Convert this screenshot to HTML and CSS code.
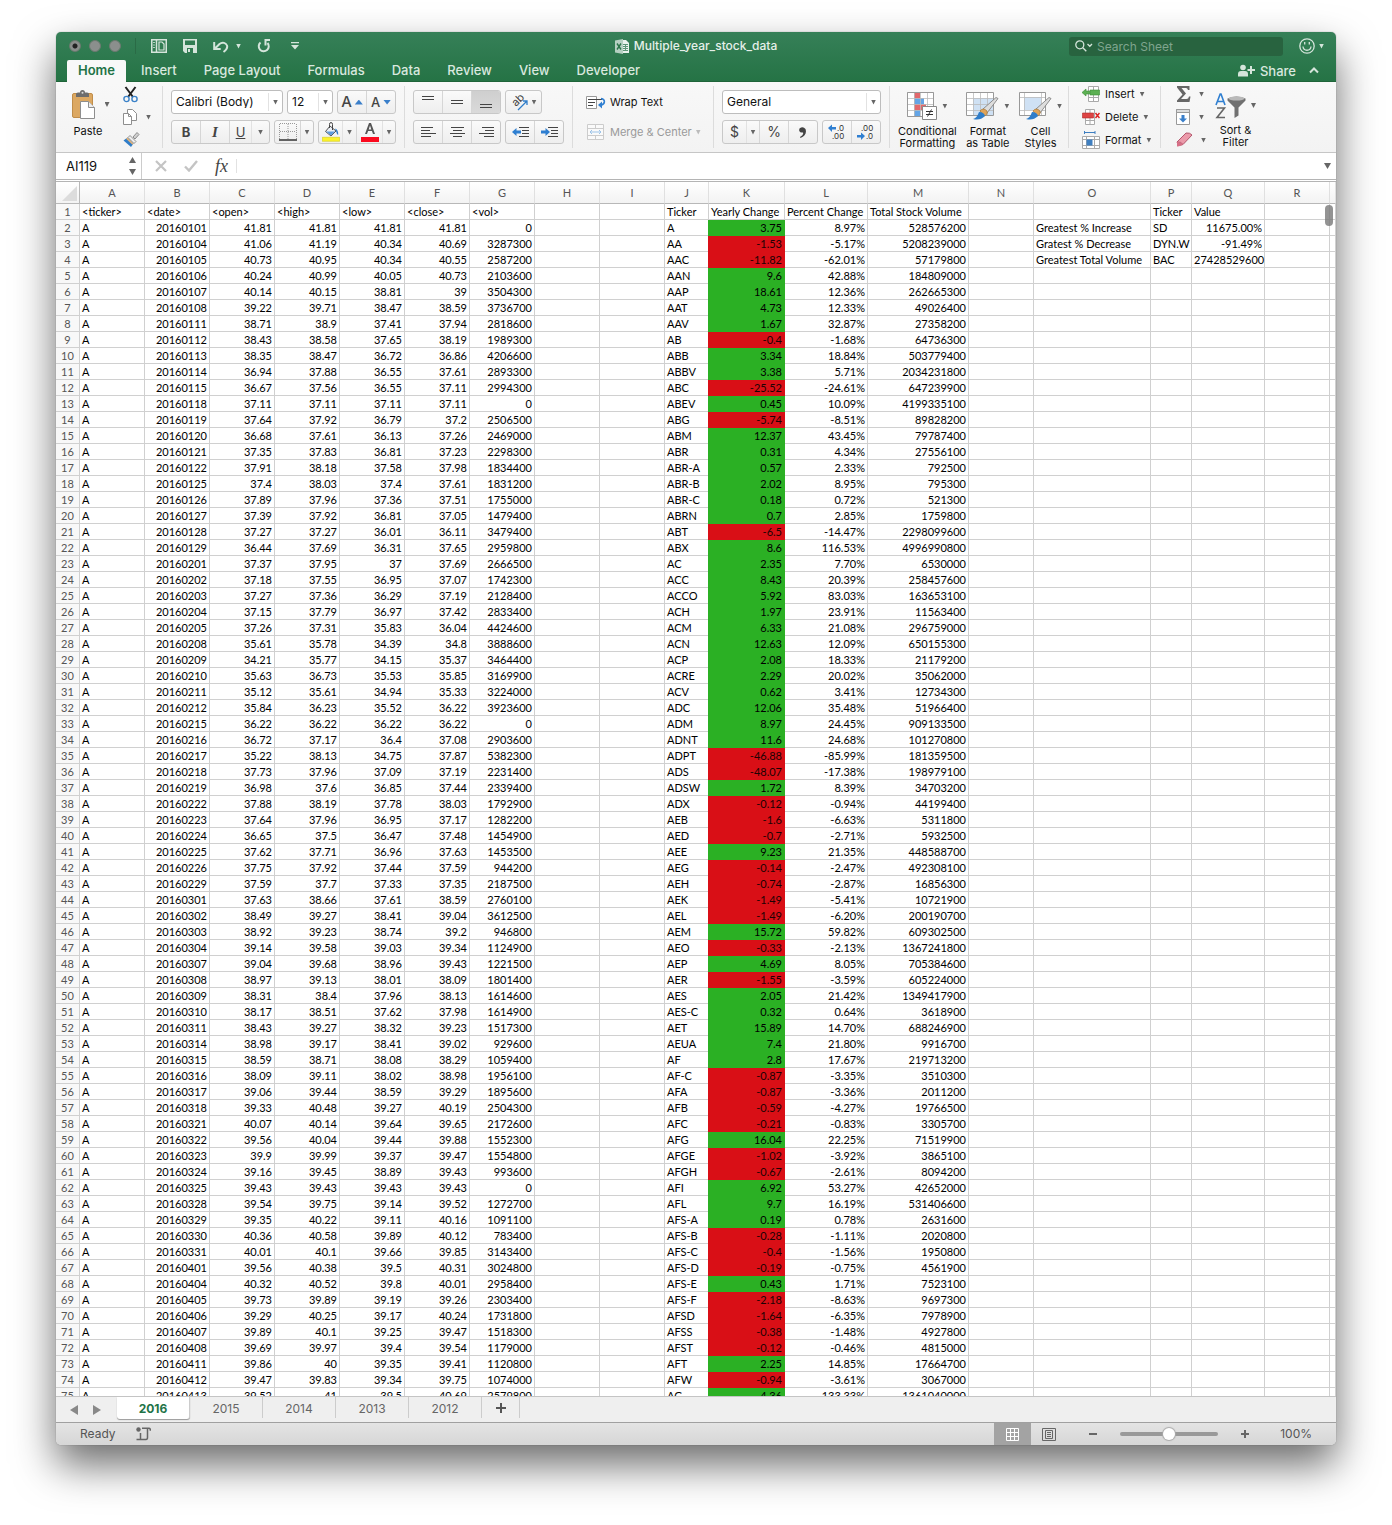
FILE: index.html
```html
<!DOCTYPE html>
<html lang="en">
<head>
<meta charset="utf-8">
<title>Multiple_year_stock_data</title>
<link rel="stylesheet" href="styles.css">
</head>
<body>
<main class="window">
  <header class="titlebar">
    <div class="title-row">
      <div class="title-left">
        <div class="lights">
          <button class="light light-edited" aria-label="Close"></button>
          <button class="light" aria-label="Minimize"></button>
          <button class="light" aria-label="Zoom"></button>
        </div>
        <div class="quick">
          <button class="plain" aria-label="New from template"><svg width="16" height="14" viewBox="0 0 16 14" fill="none" stroke="#d5e5db" stroke-width="1.5"><rect x=".75" y=".75" width="14.5" height="12.5"/><path d="M5.500 1v12"/><path d="M2.200 3.500h1.600M2.200 6h1.600M2.200 8.500h1.600" stroke-width="1"/><path d="M8 3h3l2 2v6H8z" stroke-width="1.200"/></svg></button>
          <button class="plain" aria-label="Save"><svg width="14" height="14" viewBox="0 0 14 14"><path fill="#d5e5db" fill-rule="evenodd" d="M0 0h14v14H2L0 12zM2 1.500v4.500h10v-4.500zM4 9v5h6V9zM5 10h2v3H5z"/></svg></button>
          <button class="plain undo" aria-label="Undo"><svg width="16" height="13" viewBox="0 0 16 13" fill="none" stroke="#d5e5db" stroke-width="2"><path d="M1.200 2v7h6.500M2 8.500L6.500 4c3-2.500 6.500-1 7.500 1.500.8 2.500-.5 4.500-3.500 6.500"/></svg><i class="tri tri-light"></i></button>
          <button class="plain" aria-label="Redo"><svg width="14" height="14" viewBox="0 0 14 14" fill="none" stroke="#d5e5db" stroke-width="2"><path d="M3.500 3.500a5 5 0 1 0 7 .5M13 1H8.500v5.500"/></svg></button>
          <button class="plain" aria-label="Customize toolbar"><svg width="8" height="8" viewBox="0 0 8 8" fill="#d5e5db"><path d="M0 0h8v1.200H0zM0 3h8L4 7.500z"/></svg></button>
        </div>
      </div>
      <h1 class="doc-title"><svg width="15" height="15" viewBox="0 0 15 15"><path fill="#eaf2ed" d="M6 1h5l3 3v10H6z"/><path stroke="#5d9677" d="M8 5.500h5M8 7.500h5M8 9.500h5M8 11.500h5M10.500 5v7"/><path fill="#b5d0c1" d="M0 1.500L8 0v15L0 13.500z"/><path stroke="#2b7549" stroke-width="1.400" d="M2 4.500l4 6M6 4.500l-4 6"/></svg>Multiple_year_stock_data</h1>
      <div class="title-right">
        <label class="search">
          <svg width="18" height="12" viewBox="0 0 18 12" fill="none" stroke="#d5e5db" stroke-width="1.300"><circle cx="4.800" cy="4.800" r="4"/><path d="M7.800 7.800l3.500 3.500M12.500 4l2.300 2.300L17 4" /></svg>
          <input type="search" placeholder="Search Sheet" aria-label="Search Sheet">
        </label>
        <button class="plain smile" aria-label="Feedback"><svg width="16" height="16" viewBox="0 0 16 16" fill="none" stroke="#d5e5db" stroke-width="1.300"><circle cx="8" cy="8" r="7.200"/><path d="M4 8.500c.5 5 7.500 5 8 0M5.700 4v2.500M10.300 4v2.500"/></svg><i class="tri tri-light"></i></button>
      </div>
    </div>
    <nav class="tabs">
      <a class="tab tab-active" href="#home">Home</a>
      <a class="tab" href="#insert">Insert</a>
      <a class="tab" href="#layout">Page Layout</a>
      <a class="tab" href="#formulas">Formulas</a>
      <a class="tab" href="#data">Data</a>
      <a class="tab" href="#review">Review</a>
      <a class="tab" href="#view">View</a>
      <a class="tab" href="#developer">Developer</a>
      <button class="plain share"><svg width="17" height="13" viewBox="0 0 17 13" fill="#d5e5db"><circle cx="5" cy="3.500" r="2.800"/><path d="M0 12.500V10q0-3 3-3h4q3 0 3 3v2.500zM12 2h2v3h3v2h-3v3h-2V7H9.500V5H12z"/></svg>Share</button>
      <button class="plain" aria-label="Collapse ribbon"><svg width="10" height="7" viewBox="0 0 10 7" fill="none" stroke="#d5e5db" stroke-width="2"><path d="M1 5.500l4-4 4 4"/></svg></button>
    </nav>
  </header>

  <section class="ribbon" aria-label="Home ribbon">
    <div class="group group-clip">
      <button class="big paste">
        <span class="big-icon"><svg width="26" height="30" viewBox="0 0 26 30"><rect x="1.500" y="3.500" width="20" height="24" rx="1.500" fill="#dca862" stroke="#c08d4a"/><path d="M5 7V4q0-1.500 2-1.500h2q0-2.500 2.500-2.500T14 2.500h2q2 0 2 1.500v3z" fill="#6d6d6d"/><circle cx="11.500" cy="2.800" r="1" fill="#ddd"/><path d="M9.500 11.500h8l6 6v11h-14z" fill="#fff" stroke="#8e8e8e"/><path d="M17.500 11.500v6h6" fill="#eee" stroke="#8e8e8e"/></svg><i class="tri"></i></span>
        <span class="big-label">Paste</span>
      </button>
      <div class="stack">
        <button class="plain" aria-label="Cut"><svg width="16" height="17" viewBox="0 0 16 17" fill="none"><path d="M2.500 1L10 11M12.500 1L5 11" stroke="#222" stroke-width="2"/><circle cx="3.500" cy="13" r="2.600" stroke="#3b82c8" stroke-width="1.400"/><circle cx="11.500" cy="13" r="2.600" stroke="#3b82c8" stroke-width="1.400"/></svg></button>
        <button class="plain" aria-label="Copy"><svg width="15" height="16" viewBox="0 0 15 16" fill="#fff" stroke="#8e8e8e"><path d="M4.500.500h5l4 4v7h-9z"/><path d="M.5 4.500h5l3 3v8h-8z"/><path d="M5.500 4.500v3h3" fill="none"/></svg><i class="tri"></i></button>
        <button class="plain" aria-label="Format painter"><svg width="17" height="16" viewBox="0 0 17 16"><path d="M10 5l4-4.500 2 2L12 7z" fill="#d0d0d0" stroke="#777" stroke-width=".8"/><path d="M7 3.500l6 6-2 2-6-6z" fill="#eee" stroke="#777" stroke-width=".8"/><path d="M4.500 5.500l6 6L8 15 .5 8.500z" fill="#2f7dc9"/><path d="M4.500 5.500l6 6-1 1.200-6.500-6z" fill="#e0b27a"/></svg></button>
      </div>
    </div>

    <div class="group rows">
      <div class="row">
        <span class="combo combo-font"><select aria-label="Font"><option>Calibri (Body)</option></select><span class="drop"><i class="tri"></i></span></span>
        <span class="combo combo-size"><select aria-label="Font size"><option>12</option></select><span class="drop"><i class="tri"></i></span></span>
        <span class="seg"><button class="w29" aria-label="Increase font size"><b class="a-big">A</b><i class="tri tri-blue tri-up"></i></button><button class="w29" aria-label="Decrease font size"><b class="a-small">A</b><i class="tri tri-blue"></i></button></span>
      </div>
      <div class="row">
        <span class="seg"><button class="w29 bold">B</button><button class="w29 ital">I</button><button class="w22 under">U</button><button class="w18 thin" aria-label="Underline style"><i class="tri"></i></button></span>
        <span class="seg"><button class="w27" aria-label="Borders"><svg width="18" height="18" viewBox="0 0 18 18" fill="none"><path d="M1 .5h16M.5 1v15M9 1v15M17.500 1v15M1 8.500h16" stroke="#999" stroke-dasharray="1 1"/><path d="M0 17h18" stroke="#333" stroke-width="1.400"/></svg></button><button class="w13" aria-label="Border style"><i class="tri"></i></button></span>
        <span class="seg"><button class="w24" aria-label="Fill color"><svg width="18" height="20" viewBox="0 0 18 20"><path d="M8 4l6 5-5 5-5.500-4.500z" fill="#e9eef5" stroke="#555"/><path d="M7.500 6V2.500q0-2 1.500-2t1.500 2V8" fill="none" stroke="#444"/><path d="M13 6.500q3.500 1 3.200 6.500-1.500-.5-2.200-4z" fill="#2f7dc9"/><path d="M4 9.500h9L9 13.500z" fill="#5d9bdd"/><path fill="#fbf22c" stroke="#d3cb1a" stroke-width=".6" d="M.3 15.300h17.400v4H.3z"/></svg></button><button class="w14 thin" aria-label="Fill palette"><i class="tri"></i></button><button class="w27" aria-label="Font color"><svg width="18" height="20" viewBox="0 0 18 20"><path fill="#555" fill-rule="evenodd" d="M8 1h2l4 11h-2l-1.100-3H7.100L6 12H4zM9 3.500L7.700 7.400h2.600z"/><path fill="#fb0a1e" d="M0 15h18v5H0z"/></svg></button><button class="w13 thin" aria-label="Font palette"><i class="tri"></i></button></span>
      </div>
    </div>

    <div class="group rows">
      <div class="row">
        <span class="seg"><button class="w29" aria-label="Align top"><svg width="14" height="14" viewBox="0 0 14 14" stroke="#444"><path d="M1 1.500h12M1 4.500h12"/></svg></button><button class="w29" aria-label="Align middle"><svg width="14" height="14" viewBox="0 0 14 14" stroke="#444"><path d="M1 5.500h12M1 8.500h12"/></svg></button><button class="w29 pressed" aria-label="Align bottom"><svg width="14" height="14" viewBox="0 0 14 14" stroke="#444"><path d="M1 9.500h12M1 12.500h12"/></svg></button></span>
        <span class="seg"><button class="w36" aria-label="Orientation"><svg class="orient" width="18" height="18" viewBox="0 0 18 18"><text class="abtext" transform="translate(5 14) rotate(-45)">ab</text><path d="M7 17L15.500 8.500M16 12V8h-4" fill="none" stroke="#2f7dc9" stroke-width="1.300"/></svg><i class="tri"></i></button></span>
      </div>
      <div class="row">
        <span class="seg"><button class="w29" aria-label="Align left"><svg width="15" height="14" viewBox="0 0 15 14" stroke="#444"><path d="M0 2.500h12M0 5.500h9M0 8.500h15M0 11.500h10"/></svg></button><button class="w29" aria-label="Center"><svg width="15" height="14" viewBox="0 0 15 14" stroke="#444"><path d="M1 2.500h13M3 5.500h9M0 8.500h15M3 11.500h9"/></svg></button><button class="w29" aria-label="Align right"><svg width="15" height="14" viewBox="0 0 15 14" stroke="#444"><path d="M3 2.500h12M6 5.500h9M0 8.500h15M5 11.500h10"/></svg></button></span>
        <span class="seg"><button class="w29" aria-label="Decrease indent"><svg width="17" height="14" viewBox="0 0 17 14"><path d="M7 2.500h10M10 5.500h7M10 8.500h7M7 11.500h10" stroke="#444"/><path d="M0 7l4.500-4v2.500H9v3H4.500V11z" fill="#2f7fd1"/></svg></button><button class="w29" aria-label="Increase indent"><svg width="17" height="14" viewBox="0 0 17 14"><path d="M7 2.500h10M10 5.500h7M10 8.500h7M7 11.500h10" stroke="#444"/><path d="M9 7L4.500 3v2.500H0v3h4.500V11z" fill="#2f7fd1"/></svg></button></span>
      </div>
    </div>

    <div class="group rows wraps">
      <button class="row plain item"><svg width="20" height="14" viewBox="0 0 20 14" fill="none"><path d="M.5 1.500h10v12H.500z" fill="#fff" stroke="#999"/><path d="M2 4.500h14M2 7.500h7M2 10.500h5" stroke="#444"/><path d="M15 3.500c5 1 4 6 0 6.500" stroke="#2f7fd1" stroke-width="1.600"/><path d="M12 10l4-3.500v7z" fill="#2f7fd1"/></svg>Wrap Text</button>
      <button class="row plain item dim" disabled><svg width="20" height="16" viewBox="-1 0 20 16" fill="#fafafa" stroke="#ccc"><path d="M.5.500h16v15H.5zM.5 4.500h16M.5 11.500h16M8.500.500v4M8.500 11.500v4"/><path d="M3 8h11M5 6L3 8l2 2M12 6l2 2-2 2" fill="none" stroke="#9cc3e8"/></svg><span>Merge &amp; Center</span><i class="tri tri-dim"></i></button>
    </div>

    <div class="group rows">
      <div class="row">
        <span class="combo combo-num"><select aria-label="Number format"><option>General</option></select><span class="drop"><i class="tri"></i></span></span>
      </div>
      <div class="row">
        <span class="seg"><button class="w24 sign">$</button><button class="w13 thin" aria-label="Currency"><i class="tri"></i></button><button class="w29 sign">%</button><button class="w29" aria-label="Comma style"><svg width="8" height="11" viewBox="0 0 8 11"><path fill="#444" d="M.5 1.500Q4-1 6.500 2 8.500 8 1.500 11l-.5-1Q5 8 4 5.500 1 6 .3 4q-.3-1.500.2-2.500z"/></svg></button></span>
        <span class="seg"><button class="w29" aria-label="Increase decimal"><svg width="18" height="16" viewBox="0 0 18 16"><path d="M0 4l4-3.500V3h4v2.500H4V8z" fill="#2f7fd1"/><text x="9" y="7" class="dec">.0</text><text x="4" y="15" class="dec">.00</text></svg></button><button class="w29" aria-label="Decrease decimal"><svg width="18" height="16" viewBox="0 0 18 16"><path d="M8 12L4 8.500V11H0v2.500h4V16z" fill="#2f7fd1"/><text x="4" y="7" class="dec">.00</text><text x="9" y="15" class="dec">.0</text></svg></button></span>
      </div>
    </div>

    <div class="group bigs">
      <button class="big">
        <span class="big-icon"><svg width="30" height="28" viewBox="0 0 30 28"><path d="M.5.500h26v24H.5z" fill="#fff"/><path d="M7 0h6v6H7zM7 12h12v6H7z" fill="#e2686c"/><path d="M7 6h10v6H7zM7 18h6v6.500H7z" fill="#64a5e6"/><path d="M.5.500h26v24H.5zM.5 6.500h26M.5 12.500h26M.5 18.500h26M7.500.500v24M13.500.500v24M20.500.500v24" fill="none" stroke="#bbb" stroke-width=".8"/><path d="M.5.500h26v24H.5z" fill="none" stroke="#999"/><path d="M15.500 14.500h14v13h-14z" fill="#fff" stroke="#888"/><path d="M19 19.500h7M19 22.500h7M24.500 17.500l-4 7" stroke="#333"/></svg><i class="tri"></i></span>
        <span class="big-label">Conditional<br>Formatting</span>
      </button>
      <button class="big">
        <span class="big-icon"><svg width="33" height="28" viewBox="0 0 33 28"><path d="M.5.500h27v23H.5z" fill="#fff"/><path d="M7 6h20v18H7z" fill="#cfe1f4"/><path d="M.5 6.500h27M.5 12.500h27M.5 18.500h27M7.500.500v23M14.500.500v23M21.500.500v23" stroke="#bbb" stroke-width=".8"/><path d="M.5.500h27v23H.5z" fill="none" stroke="#999"/><path d="M17 17L30 5.500l2 1L21 21z" fill="#ddd" stroke="#777" stroke-width=".8"/><path d="M14 19q3-4 7 0 1 4-3 5z" fill="#e0a458" stroke="#a87532" stroke-width=".7"/><path d="M7 27q4-1 6-7 5 0 6 4-5 5-12 3z" fill="#2f7dc9"/></svg><i class="tri"></i></span>
        <span class="big-label">Format<br>as Table</span>
      </button>
      <button class="big">
        <span class="big-icon"><svg width="33" height="28" viewBox="0 0 33 28"><path d="M.5.500h26v23H.5z" fill="#fff"/><path d="M5 5h17v13H5z" fill="#cfe1f4"/><path d="M.5 5.500h26M.5 18.500h26M5.500.500v23M22.500.500v23" stroke="#bbb" stroke-width=".8"/><path d="M.5.500h26v23H.5z" fill="none" stroke="#999"/><path d="M17 17L30 5.500l2 1L21 21z" fill="#ddd" stroke="#777" stroke-width=".8"/><path d="M14 19q3-4 7 0 1 4-3 5z" fill="#e0a458" stroke="#a87532" stroke-width=".7"/><path d="M7 27q4-1 6-7 5 0 6 4-5 5-12 3z" fill="#2f7dc9"/></svg><i class="tri"></i></span>
        <span class="big-label">Cell<br>Styles</span>
      </button>
    </div>

    <div class="group stack cells">
      <button class="plain item"><svg width="18" height="16" viewBox="0 0 18 16"><path d="M6.500.500h10v15h-10zM11.500.500v15M6.500 11.500h10" fill="#fff" stroke="#aaa"/><path d="M0 6.500L4 3v2h3.500V8H4v2zM8 4h9.500v5H8z" fill="#5cb053" stroke="#3d8f35" stroke-width=".6"/></svg>Insert<i class="tri"></i></button>
      <button class="plain item"><svg width="18" height="16" viewBox="0 0 18 16"><path d="M3.500.500h9v15h-9zM8 .5v15M3.500 11.500h9" fill="#fff" stroke="#aaa"/><path d="M.5 4h11v5H.500z" fill="#dd4444" stroke="#b02a2a" stroke-width=".6"/><path d="M13.500 4l4 5M17.500 4l-4 5" stroke="#d22" stroke-width="1.500"/></svg>Delete<i class="tri"></i></button>
      <button class="plain item"><svg width="18" height="18" viewBox="0 0 18 18"><path d="M.5 5.500h17v12H.5zM.5 8.500h17M.5 14.500h17M4.500 5.500v12M12.500 5.500v12" fill="#fff" stroke="#aaa"/><path d="M4.500 8.500h6v6h-6z" fill="#3f7fc0"/><path d="M3 1.500h10M2.500 0v3M13 0v3" stroke="#3f7fc0" fill="none"/></svg>Format<i class="tri"></i></button>
    </div>

    <div class="group group-edit">
      <div class="stack edits">
        <button class="plain" aria-label="AutoSum"><svg width="15" height="16" viewBox="0 0 15 16"><path fill="#666" d="M1 0h12.500v4H12q-.5-2-2-2H5.500l4.500 5.500L5 13h5.500q2 0 2.500-2.500h1.500L13.500 16H1v-1.500L6.500 8.500 1 1.500z"/></svg><i class="tri"></i></button>
        <button class="plain" aria-label="Fill"><svg width="15" height="16" viewBox="0 0 15 16"><path d="M.5.500h13v15H.5z" fill="#fff" stroke="#999"/><path d="M.5.500h13v3H.500z" fill="#ddd" stroke="#999"/><path d="M5.500 6h3v3.500H11l-4 4-4-4h2.500z" fill="#3a7fca"/></svg><i class="tri"></i></button>
        <button class="plain" aria-label="Clear"><svg width="17" height="16" viewBox="0 0 17 16"><path d="M1 10l9-9q4-.5 6 2l-9 9.500q-5 2-6-2.500z" fill="#eb9aaa" stroke="#b3566c"/><path d="M1 10q4-.5 6 2.500" fill="none" stroke="#b3566c"/><path d="M1 10q4-.5 6 2.500-4 2.500-6 2z" fill="#d66f86"/></svg><i class="tri"></i></button>
      </div>
      <button class="big sort">
        <span class="big-icon"><svg width="31" height="26" viewBox="0 0 31 26"><path fill="none" stroke="#2f7fd1" stroke-width="1.600" d="M1 12L5.200 1h.8L10 12M2.500 8.500h6"/><path fill="none" stroke="#666" stroke-width="1.600" d="M2 15h7.500L2 24.500h8"/><path d="M12.500 5.500q9-4 18 0v2l-7 7v8l-4 2.500V14.500l-7-7z" fill="#707070"/><ellipse cx="21.500" cy="5.500" rx="8" ry="2" fill="#b9b9b9"/></svg><i class="tri"></i></span>
        <span class="big-label">Sort &amp;<br>Filter</span>
      </button>
    </div>
  </section>

  <section class="formula" aria-label="Formula bar">
    <div class="namebox"><input type="text" value="AI119" aria-label="Name box"><span class="stepper"><i class="tri tri-up tri-big"></i><i class="tri tri-big"></i></span></div>
    <div class="fx-tools">
      <button class="plain" aria-label="Cancel"><svg width="12" height="12" viewBox="0 0 12 12" stroke="#c4c4c4" stroke-width="2.200"><path d="M1 1l10 10M11 1L1 11"/></svg></button>
      <button class="plain" aria-label="Enter"><svg width="14" height="12" viewBox="0 0 14 12" fill="none" stroke="#c4c4c4" stroke-width="2.400"><path d="M1 6.500l4 4L13 1"/></svg></button>
      <button class="plain fx">fx</button>
    </div>
    <input class="fx-input" type="text" aria-label="Formula">
    <button class="plain fx-more" aria-label="Expand formula bar"><i class="tri tri-big"></i></button>
  </section>

  <section class="sheet">
    <table class="grid">
      <colgroup>
        <col class="c-head"><col class="c-std" span="9"><col class="c-j"><col class="c-k"><col class="c-l"><col class="c-m"><col class="c-std"><col class="c-o"><col class="c-p"><col class="c-q"><col class="c-std"><col>
      </colgroup>
      <thead><tr id="letters"></tr></thead>
      <tbody id="cells"></tbody>
    </table>
    <div class="scroll-thumb"></div>
  </section>

  <nav class="sheets" aria-label="Sheets">
    <div class="sheet-nav">
      <button class="plain" aria-label="Previous sheet"><svg width="8" height="10" viewBox="0 0 8 10" fill="#888"><path d="M8 0v10L0 5z"/></svg></button>
      <button class="plain" aria-label="Next sheet"><svg width="8" height="10" viewBox="0 0 8 10" fill="#888"><path d="M0 0v10l8-5z"/></svg></button>
    </div>
    <a class="sheet-tab sheet-active" href="#2016">2016</a>
    <a class="sheet-tab" href="#2015">2015</a>
    <a class="sheet-tab" href="#2014">2014</a>
    <a class="sheet-tab" href="#2013">2013</a>
    <a class="sheet-tab" href="#2012">2012</a>
    <button class="plain add" aria-label="Add sheet"><svg width="10" height="10" viewBox="0 0 10 10" stroke="#555" stroke-width="2"><path d="M0 5h10M5 0v10"/></svg></button>
  </nav>

  <footer class="status">
    <span class="ready">Ready</span>
    <svg width="15" height="14" viewBox="0 0 15 14" fill="none" stroke="#666" stroke-width="1.500"><circle cx="2.500" cy="2.500" r="2.200" fill="#666" stroke="none"/><path d="M6 1.200h7q1.500 0 1.300 2.500M11.500 1.500v9q0 2-1.500 2H1M4.500 6v6.500M.5 12.500h8"/></svg>
    <div class="status-right">
      <button class="view view-on" aria-label="Normal view"><svg width="13" height="13" viewBox="0 0 13 13" fill="none" stroke="#fff"><path d="M.5.500h12v12H.5zM.5 4.500h12M.5 8.500h12M4.500.500v12M8.500.500v12"/></svg></button>
      <button class="view" aria-label="Page layout view"><svg width="14" height="13" viewBox="0 0 14 13" fill="none" stroke="#666"><path d="M.5.500h13v12H.5zM3.500 2.500h7v8h-7zM5 4.500h4M5 6.500h4M5 8.500h4"/></svg></button>
      <button class="plain zoom-btn" aria-label="Zoom out"><svg width="8" height="2" viewBox="0 0 8 2" fill="#666"><path d="M0 0h8v2H0z"/></svg></button>
      <input class="zoom" type="range" min="0" max="200" value="100" aria-label="Zoom">
      <button class="plain zoom-btn" aria-label="Zoom in"><svg width="8" height="8" viewBox="0 0 8 8" fill="#666"><path d="M3 0h2v3h3v2H5v3H3V5H0V3h3z"/></svg></button>
      <span class="pct">100%</span>
    </div>
  </footer>
</main>
<script src="app.js"></script>
</body>
</html>
```
FILE: styles.css
```css
* { box-sizing: border-box; }
body {
  margin: 0;
  height: 100vh;
  padding: 32px 56px 80px;
  background: #fff;
  font: 11px/12px Inter, Roboto, sans-serif;
  color: #111;
  overflow: hidden;
}
button, input, select { font: inherit; color: inherit; margin: 0; padding: 0; }
a { text-decoration: none; color: inherit; }
svg { display: block; flex: none; }

.window {
  height: 100%;
  display: flex;
  flex-direction: column;
  border-radius: 5px;
  background: #f5f5f5;
  box-shadow: 0 0 1px rgba(0, 0, 0, .5), 0 20px 42px rgba(0, 0, 0, .58);
}
.plain {
  display: flex;
  align-items: center;
  border: 0;
  background: none;
}
.tri {
  flex: none;
  width: 5px;
  height: 5px;
  background: #666;
  clip-path: polygon(0 0, 100% 0, 50% 100%);
}
.tri-up { clip-path: polygon(50% 0, 100% 100%, 0 100%); }
.tri-light { background: #d5e5db; }
.tri-dim { background: #bbb; }
.tri-blue { width: 8px; background: #3a7fca; }
.tri-big { width: 7px; height: 6px; }

/* Title bar */
.titlebar {
  flex: none;
  border-radius: 5px 5px 0 0;
  background: linear-gradient(#368058, #257345);
  border-bottom: 1px solid #1f6439;
  color: #d9e8df;
}
.title-row {
  height: 28px;
  display: grid;
  grid-template-columns: 1fr auto 1fr;
  align-items: center;
}
.title-left, .lights, .quick, .title-right { display: flex; align-items: center; }
.title-left { padding-left: 13px; }
.lights { gap: 8px; padding-right: 14px; border-right: 1px solid #2a6b46; height: 16px; }
.light {
  width: 12px;
  height: 12px;
  border: 1px solid #6c7a70;
  border-radius: 50%;
  background: #8b8f8d;
}
.light-edited { background: radial-gradient(circle, #222 0 2px, #8b8f8d 3px); }
.quick { padding-left: 15px; gap: 16px; }
.undo { gap: 7px; }
.undo + .plain { padding-right: 4px; }
.doc-title {
  margin: 0;
  display: flex;
  align-items: center;
  gap: 4px;
  font-size: 12px;
  font-weight: 500;
  color: #e6f0ea;
}
.title-right { justify-content: flex-end; padding-right: 12px; gap: 16px; }
.search {
  width: 214px;
  height: 19px;
  display: flex;
  align-items: center;
  gap: 4px;
  padding-left: 6px;
  border-radius: 3px;
  background: #28633f;
}
.search input {
  flex: 1;
  min-width: 0;
  border: 0;
  outline: 0;
  background: none;
  font-size: 12px;
  appearance: none;
}
.search input::placeholder { color: #7fa58e; }
.smile { gap: 4px; }
.tabs { height: 21px; display: flex; padding: 0 17px 0 11px; gap: 3px; }
.tab {
  height: 22px;
  padding: 0 12px;
  font-size: 13px;
  line-height: 21px;
  font-weight: 500;
}
.tab-active {
  padding: 0 11px;
  background: #f8f8f8;
  color: #217346;
  font-weight: 600;
  border-radius: 2px 2px 0 0;
}
.share { margin-left: auto; margin-right: 10px; gap: 5px; font-size: 13px; font-weight: 500; }

/* Ribbon */
.ribbon {
  flex: none;
  height: 71px;
  display: flex;
  padding: 4px 0;
  background: linear-gradient(#f8f8f8, #f3f3f3);
  border-bottom: 1px solid #c6c6c6;
}
.group {
  flex: none;
  display: flex;
  padding: 0 8px;
  border-right: 1px solid #dcdcdc;
}
.group:last-child { border-right: 0; }
.rows { flex-direction: column; gap: 6px; padding-top: 4px; }
.row { display: flex; gap: 4px; height: 24px; }
.stack { display: flex; flex-direction: column; justify-content: space-between; }
.stack .plain { height: 16px; gap: 8px; }
.group-clip { width: 107px; padding: 0 0 0 14px; gap: 13px; }
.big {
  display: flex;
  flex-direction: column;
  align-items: center;
  border: 0;
  background: none;
  padding-top: 6px;
}
.big-icon { display: flex; align-items: center; gap: 5px; height: 28px; }
.big-label { margin-top: 5px; text-align: center; line-height: 12px; }
.paste { width: 40px; padding-top: 3px; }
.paste .big-icon { height: 31px; gap: 8px; }
.paste .big-label { padding-right: 4px; }
.combo {
  display: flex;
  border: 1px solid #bdbdbd;
  border-radius: 3px;
  background: #fff;
  align-items: center;
}
.combo select {
  flex: 1;
  min-width: 0;
  height: 20px;
  padding-left: 4px;
  border: 0;
  background: none;
  appearance: none;
  font-size: 12px;
}
.drop {
  width: 14px;
  height: 18px;
  display: flex;
  align-items: center;
  justify-content: center;
  border-left: 1px solid #e2e2e2;
}
.combo-font { width: 112px; }
.combo-size { width: 46px; }
.combo-num { width: 159px; }
.seg {
  display: flex;
  border: 1px solid #c8c8c8;
  border-radius: 3px;
  background: linear-gradient(#fafafa, #eee);
  overflow: hidden;
}
.seg button {
  display: flex;
  align-items: center;
  justify-content: center;
  gap: 3px;
  border: 0;
  background: none;
  color: #444;
}
.seg button + button { border-left: 1px solid #d6d6d6; }
.seg .thin { border-left-color: #e2e2e2; }
.seg .pressed { background: linear-gradient(#cfcfcf, #dadada); }
.w13 { width: 13px; }
.w14 { width: 14px; }
.w18 { width: 18px; }
.w22 { width: 22px; }
.w24 { width: 23px; }
.w27 { width: 26px; }
.w27:first-child { width: 25px; }
.w29 { width: 29px; }
.w29:first-child { width: 28px; }
.w36 { width: 35px; }
.a-big { font-size: 15px; font-weight: 500; }
.a-small { font-size: 13px; font-weight: 500; }
.seg .bold { font-size: 13px; font-weight: 700; }
.seg .ital { font: italic 700 15px "Liberation Serif", serif; }
.seg .under { font-size: 13px; text-decoration: underline; }
.seg .sign { font-size: 14px; }
.orient { overflow: visible; }
.abtext { font: 11px Inter, sans-serif; fill: #444; }
.dec { font: 8px Inter, sans-serif; fill: #333; }
.wraps { width: 141px; padding-left: 13px; }
.item { gap: 4px; font-weight: 400; }
.dim { color: #9a9a9a; }
.bigs { width: 179px; padding: 0 6px 0 8px; justify-content: space-between; }
.cells { width: 92px; padding: 0 0 0 13px; }
.cells .item { gap: 5px; }
.group-edit { padding-left: 15px; gap: 9px; }

/* Formula bar */
.formula {
  flex: none;
  height: 29px;
  display: flex;
  background: #fff;
  border-bottom: 3px double #b4b4b4;
}
.namebox { width: 86px; display: flex; align-items: center; padding: 0 5px 0 10px; border-right: 1px solid #ccc; }
.namebox input { flex: 1; min-width: 0; border: 0; font-size: 13px; }
.stepper { display: flex; flex-direction: column; gap: 6px; }
.fx-tools { display: flex; align-items: center; width: 95px; justify-content: space-between; padding: 0 8px 0 13px; border-right: 1px solid #e2e2e2; margin: 6px 0; }
.fx { font: italic 18px "Liberation Serif", serif; color: #444; }
.fx-input { flex: 1; min-width: 0; border: 0; }
.fx-more { padding-right: 5px; }

/* Cells */
.sheet { flex: 1; min-height: 0; overflow: hidden; position: relative; background: #fff; }
.grid {
  width: 100%;
  table-layout: fixed;
  border-collapse: separate;
  border-spacing: 0;
  font: 11px/15px Lato, sans-serif;
  color: #000;
}
.c-head { width: 24px; }
.c-std { width: 65px; }
.c-j { width: 44px; }
.c-k { width: 76px; }
.c-l { width: 83px; }
.c-m { width: 101px; }
.c-o { width: 117px; }
.c-p { width: 41px; }
.c-q { width: 73px; }
.grid th, .grid td {
  height: 16px;
  padding: 0 2px;
  border: solid #d0d0d0;
  border-width: 0 1px 1px 0;
  white-space: nowrap;
}
.grid th { font-weight: 400; color: #555; text-align: center; background: #f8f8f8; }
.grid thead th {
  height: 22px;
  line-height: 21px;
  background: linear-gradient(#fff, #f3f3f3);
  border-bottom-color: #b8b8b8;
  border-right-color: #e0e0e0;
}
.grid thead .corner { padding: 0 2px 2px 6px; border-right-color: #b8b8b8; }
.corner svg { margin-top: 3px; }
.grid td { text-align: left; }
.grid .num { text-align: right; }
.grid .up { background: #2bb024; border-color: #2bb024; box-shadow: -1px 0 #2bb024; }
.grid .down { background: #d90f16; border-color: #d90f16; box-shadow: -1px 0 #d90f16; color: #1c0203; }
.scroll-thumb {
  position: absolute;
  top: 23px;
  right: 3px;
  width: 8px;
  height: 21px;
  border-radius: 4px;
  background: rgba(120, 120, 120, .8);
}

/* Sheet tabs */
.sheets {
  flex: none;
  height: 26px;
  display: flex;
  background: #efefef;
  border-top: 1px solid #c4c4c4;
  font-size: 12px;
  color: #666;
}
.sheet-nav { width: 61px; display: flex; gap: 15px; padding-left: 14px; }
.sheet-tab {
  width: 73px;
  height: 21px;
  line-height: 23px;
  text-align: center;
  border-right: 1px solid #ccc;
}
.sheet-active {
  height: 22px;
  background: #fff;
  color: #217346;
  font-weight: 700;
  border-radius: 0 0 3px 3px;
  box-shadow: 0 1px 1px #999;
}
.add { width: 38px; height: 21px; justify-content: center; border-right: 1px solid #ccc; }

/* Status bar */
.status {
  flex: none;
  height: 23px;
  display: flex;
  align-items: center;
  gap: 20px;
  padding-left: 24px;
  border-top: 1px solid #a0a0a0;
  border-radius: 0 0 5px 5px;
  background: linear-gradient(#e4e4e4, #d6d6d6);
  color: #555;
}
.ready, .pct { font-size: 12px; }
.status-right { margin-left: auto; display: flex; align-items: center; height: 100%; padding-right: 24px; }
.view { width: 35px; height: 100%; display: flex; align-items: center; justify-content: center; border: 0; background: none; }
.view-on { width: 37px; background: #a3a3a3; }
.zoom-btn { width: 54px; justify-content: center; }
.zoom { width: 98px; height: 14px; appearance: none; background: none; }
.zoom::-webkit-slider-runnable-track { height: 4px; border-radius: 2px; background: #999; }
.zoom::-webkit-slider-thumb {
  appearance: none;
  width: 12px;
  height: 12px;
  margin-top: -4px;
  border-radius: 50%;
  background: #fff;
  box-shadow: 0 0 1px 1px #aaa;
}
.pct { width: 40px; text-align: right; }
```
FILE: app.js
```js
// Each line: date open high low close volume | ticker change percent volume
const lines = `20160101 41.81 41.81 41.81 41.81 0|A 3.75 8.97% 528576200
20160104 41.06 41.19 40.34 40.69 3287300|AA -1.53 -5.17% 5208239000
20160105 40.73 40.95 40.34 40.55 2587200|AAC -11.82 -62.01% 57179800
20160106 40.24 40.99 40.05 40.73 2103600|AAN 9.6 42.88% 184809000
20160107 40.14 40.15 38.81 39 3504300|AAP 18.61 12.36% 262665300
20160108 39.22 39.71 38.47 38.59 3736700|AAT 4.73 12.33% 49026400
20160111 38.71 38.9 37.41 37.94 2818600|AAV 1.67 32.87% 27358200
20160112 38.43 38.58 37.65 38.19 1989300|AB -0.4 -1.68% 64736300
20160113 38.35 38.47 36.72 36.86 4206600|ABB 3.34 18.84% 503779400
20160114 36.94 37.88 36.55 37.61 2893300|ABBV 3.38 5.71% 2034231800
20160115 36.67 37.56 36.55 37.11 2994300|ABC -25.52 -24.61% 647239900
20160118 37.11 37.11 37.11 37.11 0|ABEV 0.45 10.09% 4199335100
20160119 37.64 37.92 36.79 37.2 2506500|ABG -5.74 -8.51% 89828200
20160120 36.68 37.61 36.13 37.26 2469000|ABM 12.37 43.45% 79787400
20160121 37.35 37.83 36.81 37.23 2298300|ABR 0.31 4.34% 27556100
20160122 37.91 38.18 37.58 37.98 1834400|ABR-A 0.57 2.33% 792500
20160125 37.4 38.03 37.4 37.61 1831200|ABR-B 2.02 8.95% 795300
20160126 37.89 37.96 37.36 37.51 1755000|ABR-C 0.18 0.72% 521300
20160127 37.39 37.92 36.81 37.05 1479400|ABRN 0.7 2.85% 1759800
20160128 37.27 37.27 36.01 36.11 3479400|ABT -6.5 -14.47% 2298099600
20160129 36.44 37.69 36.31 37.65 2959800|ABX 8.6 116.53% 4996990800
20160201 37.37 37.95 37 37.69 2666500|AC 2.35 7.70% 6530000
20160202 37.18 37.55 36.95 37.07 1742300|ACC 8.43 20.39% 258457600
20160203 37.27 37.36 36.29 37.19 2128400|ACCO 5.92 83.03% 163653100
20160204 37.15 37.79 36.97 37.42 2833400|ACH 1.97 23.91% 11563400
20160205 37.26 37.31 35.83 36.04 4424600|ACM 6.33 21.08% 296759000
20160208 35.61 35.78 34.39 34.8 3888600|ACN 12.63 12.09% 650155300
20160209 34.21 35.77 34.15 35.37 3464400|ACP 2.08 18.33% 21179200
20160210 35.63 36.73 35.53 35.85 3169900|ACRE 2.29 20.02% 35062000
20160211 35.12 35.61 34.94 35.33 3224000|ACV 0.62 3.41% 12734300
20160212 35.84 36.23 35.52 36.22 3923600|ADC 12.06 35.48% 51966400
20160215 36.22 36.22 36.22 36.22 0|ADM 8.97 24.45% 909133500
20160216 36.72 37.17 36.4 37.08 2903600|ADNT 11.6 24.68% 101270800
20160217 35.22 38.13 34.75 37.87 5382300|ADPT -46.88 -85.99% 181359500
20160218 37.73 37.96 37.09 37.19 2231400|ADS -48.07 -17.38% 198979100
20160219 36.98 37.6 36.85 37.44 2339400|ADSW 1.72 8.39% 34703200
20160222 37.88 38.19 37.78 38.03 1792900|ADX -0.12 -0.94% 44199400
20160223 37.64 37.96 36.95 37.17 1282200|AEB -1.6 -6.63% 5311800
20160224 36.65 37.5 36.47 37.48 1454900|AED -0.7 -2.71% 5932500
20160225 37.62 37.71 36.96 37.63 1453500|AEE 9.23 21.35% 448588700
20160226 37.75 37.92 37.44 37.59 944200|AEG -0.14 -2.47% 492308100
20160229 37.59 37.7 37.33 37.35 2187500|AEH -0.74 -2.87% 16856300
20160301 37.63 38.66 37.61 38.59 2760100|AEK -1.49 -5.41% 10721900
20160302 38.49 39.27 38.41 39.04 3612500|AEL -1.49 -6.20% 200190700
20160303 38.92 39.23 38.74 39.2 946800|AEM 15.72 59.82% 609302500
20160304 39.14 39.58 39.03 39.34 1124900|AEO -0.33 -2.13% 1367241800
20160307 39.04 39.68 38.96 39.43 1221500|AEP 4.69 8.05% 705384600
20160308 38.97 39.13 38.01 38.09 1801400|AER -1.55 -3.59% 605224000
20160309 38.31 38.4 37.96 38.13 1614600|AES 2.05 21.42% 1349417900
20160310 38.17 38.51 37.62 37.98 1614900|AES-C 0.32 0.64% 3618900
20160311 38.43 39.27 38.32 39.23 1517300|AET 15.89 14.70% 688246900
20160314 38.98 39.17 38.41 39.02 929600|AEUA 7.4 21.80% 9916700
20160315 38.59 38.71 38.08 38.29 1059400|AF 2.8 17.67% 219713200
20160316 38.09 39.11 38.02 38.98 1956100|AF-C -0.87 -3.35% 3510300
20160317 39.06 39.44 38.59 39.29 1895600|AFA -0.87 -3.36% 2011200
20160318 39.33 40.48 39.27 40.19 2504300|AFB -0.59 -4.27% 19766500
20160321 40.07 40.14 39.64 39.65 2172600|AFC -0.21 -0.83% 3305700
20160322 39.56 40.04 39.44 39.88 1552300|AFG 16.04 22.25% 71519900
20160323 39.9 39.99 39.37 39.47 1554800|AFGE -1.02 -3.92% 3865100
20160324 39.16 39.45 38.89 39.43 993600|AFGH -0.67 -2.61% 8094200
20160325 39.43 39.43 39.43 39.43 0|AFI 6.92 53.27% 42652000
20160328 39.54 39.75 39.14 39.52 1272700|AFL 9.7 16.19% 531406600
20160329 39.35 40.22 39.11 40.16 1091100|AFS-A 0.19 0.78% 2631600
20160330 40.36 40.58 39.89 40.12 783400|AFS-B -0.28 -1.11% 2020800
20160331 40.01 40.1 39.66 39.85 3143400|AFS-C -0.4 -1.56% 1950800
20160401 39.56 40.38 39.5 40.31 3024800|AFS-D -0.19 -0.75% 4561900
20160404 40.32 40.52 39.8 40.01 2958400|AFS-E 0.43 1.71% 7523100
20160405 39.73 39.89 39.19 39.26 2303400|AFS-F -2.18 -8.63% 9697300
20160406 39.29 40.25 39.17 40.24 1731800|AFSD -1.64 -6.35% 7978900
20160407 39.89 40.1 39.25 39.47 1518300|AFSS -0.38 -1.48% 4927800
20160408 39.69 39.97 39.4 39.54 1179000|AFST -0.12 -0.46% 4815000
20160411 39.86 40 39.35 39.41 1120800|AFT 2.25 14.85% 17664700
20160412 39.47 39.83 39.34 39.75 1074000|AFW -0.94 -3.61% 3067000
20160413 39.52 41 39.5 40.69 2579800|AG 4.36 133.33% 1361040000`.split("\n");

const summary = [
  ["Greatest % Increase", "SD", "11675.00%"],
  ["Gratest % Decrease", "DYN.W", "-91.49%"],
  ["Greatest Total Volume", "BAC", "27428529600"],
];

const headings = ["<ticker>", "<date>", "<open>", "<high>", "<low>", "<close>", "<vol>", "", "",
  "Ticker", "Yearly Change", "Percent Change", "Total Stock Volume", "", "", "Ticker", "Value", "", ""];

const letters = document.getElementById("letters");
const body = document.getElementById("cells");

const corner = document.createElement("th");
corner.className = "corner";
corner.innerHTML = '<svg width="15" height="15" viewBox="0 0 15 15" fill="#dcdcdc"><path d="M15 0v15H0z"/></svg>';
letters.append(corner);
for (const letter of [..."ABCDEFGHIJKLMNOPQR", ""]) {
  const th = document.createElement("th");
  th.textContent = letter;
  letters.append(th);
}

function addRow(number, values) {
  const tr = body.insertRow();
  const th = document.createElement("th");
  th.textContent = number;
  tr.append(th);
  values.forEach((value, column) => {
    const td = tr.insertCell();
    td.textContent = value;
    if (/^-?\d/.test(value)) td.classList.add("num");
    if (column === 10 && number > 1) td.classList.add(value.startsWith("-") ? "down" : "up");
  });
}

addRow(1, headings);
lines.forEach((line, i) => {
  const [prices, result] = line.split("|").map((part) => part.split(" "));
  addRow(i + 2, ["A", ...prices, "", "", ...result, "", ...(summary[i] || ["", "", ""]), "", ""]);
});
```
